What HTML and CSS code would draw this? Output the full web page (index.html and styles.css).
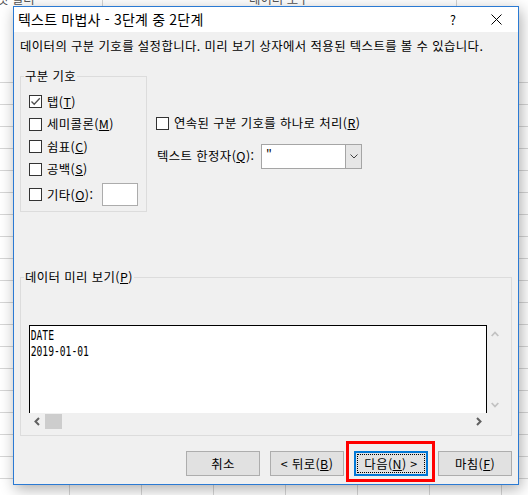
FILE: index.html
```html
<!DOCTYPE html>
<html lang="ko">
<head>
<meta charset="utf-8">
<title>텍스트 마법사</title>
<link rel="stylesheet" href="styles.css">
</head>
<body>
<div class="ribbon">
  <div class="rib-group g1"><span class="rib-label">릿 필터</span></div>
  <div class="rib-group g2"><span class="rib-label">데이터 도구</span></div>
</div>
<div class="sheet"></div>

<div class="dialog">
  <div class="titlebar">
    <span class="title">텍스트 마법사 - 3단계 중 2단계</span>
    <span class="tb-help">?</span>
    <svg class="tb-close" width="11" height="11" viewBox="0 0 11 11"><path d="M0.5 0.5 L10.5 10.5 M10.5 0.5 L0.5 10.5" stroke="#000" stroke-width="1" fill="none"/></svg>
  </div>
  <div class="body">
    <p class="desc">데이터의 구분 기호를 설정합니다. 미리 보기 상자에서 적용된 텍스트를 볼 수 있습니다.</p>
    <div class="options">
      <div class="group delims">
        <div class="group-label">구분 기호</div>
        <div class="rows">
          <div class="chk-row"><span class="cb"><svg width="11" height="11" viewBox="0 0 11 11"><path d="M1.5 5.5 L4.2 8.3 L9.8 2.2" stroke="#505050" stroke-width="1.3" fill="none"/></svg></span><span>탭(<u>T</u>)</span></div>
          <div class="chk-row"><span class="cb"></span><span>세미콜론(<u>M</u>)</span></div>
          <div class="chk-row"><span class="cb"></span><span>쉼표(<u>C</u>)</span></div>
          <div class="chk-row"><span class="cb"></span><span>공백(<u>S</u>)</span></div>
          <div class="chk-row other"><span class="cb"></span><span>기타(<u>O</u>):</span><span class="other-input"></span></div>
        </div>
      </div>
      <div class="right-opts">
        <div class="chk-row single"><span class="cb"></span><span>연속된 구분 기호를 하나로 처리(<u>R</u>)</span></div>
        <div class="qual">
          <span class="qual-label">텍스트 한정자(<u>Q</u>):</span>
          <div class="combo">
            <span class="combo-val">"</span>
            <span class="combo-btn"><svg width="8" height="5" viewBox="0 0 8 5"><path d="M0.5 0.5 L4 4 L7.5 0.5" stroke="#404040" stroke-width="1" fill="none"/></svg></span>
          </div>
        </div>
      </div>
    </div>

    <div class="group preview">
      <div class="group-label">데이터 미리 보기(<u>P</u>)</div>
      <div class="pv">
        <div class="pv-text"><div class="pv-lines">DATE<br>2019-01-01</div></div>
        <div class="vscroll">
          <svg width="8" height="6" viewBox="0 0 8 6"><path d="M0.7 5 L4 1.5 L7.3 5" stroke="#c2c2c2" stroke-width="1.8" fill="none"/></svg>
          <svg width="8" height="6" viewBox="0 0 8 6"><path d="M0.7 1 L4 4.5 L7.3 1" stroke="#c2c2c2" stroke-width="1.8" fill="none"/></svg>
        </div>
        <div class="hscroll">
          <span class="sb-btn"><svg width="6" height="9" viewBox="0 0 6 9"><path d="M5 1 L1.5 4.5 L5 8" stroke="#606060" stroke-width="2" fill="none"/></svg></span>
          <span class="sb-thumb"></span>
          <span class="sb-track"></span>
          <span class="sb-btn"><svg width="6" height="9" viewBox="0 0 6 9"><path d="M1 1 L4.5 4.5 L1 8" stroke="#606060" stroke-width="2" fill="none"/></svg></span>
        </div>
        <div class="corner"></div>
      </div>
    </div>

    <div class="buttons">
      <div class="btn">취소</div>
      <div class="btn">&lt; 뒤로(<u>B</u>)</div>
      <div class="btn focus"><span class="ring">다음(<u>N</u>) &gt;</span></div>
      <div class="btn">마침(<u>F</u>)</div>
    </div>
  </div>
</div>

<div class="highlight"></div>
</body>
</html>
```

FILE: styles.css
```css
* { box-sizing: border-box; }
html, body { margin: 0; padding: 0; }
body {
  width: 528px;
  height: 495px;
  overflow: hidden;
  position: relative;
  background: #fff;
  font-family: "Noto Sans CJK KR", "Noto Sans", sans-serif;
  font-size: 12.4px;
  letter-spacing: 0.4px;
  color: #000;
}
u { text-decoration: underline; text-underline-offset: 1px; }

/* Excel backdrop */
.ribbon {
  height: 61px;
  display: flex;
  align-items: flex-start;
  background: #fff;
}
.rib-group {
  height: 6px;
  border-right: 1px solid #d4d4d4;
  overflow: visible;
}
.g1 { width: 103px; text-indent: -3px; }
.g2 { width: 354px; padding-left: 146px; }
.rib-label {
  display: block;
  margin-top: -9px;
  line-height: 16px;
  color: #555;
  letter-spacing: 0;
  white-space: nowrap;
}
.sheet {
  height: 434px;
  background-color: #fff;
  background-image:
    linear-gradient(to bottom, transparent 21px, #d6d6d6 21px),
    linear-gradient(to right, transparent 69px, #d6d6d6 69px, #d6d6d6 70px, transparent 70px);
  background-size: 100% 22px, 72px 100%;
}

/* dialog window */
.dialog {
  position: absolute;
  left: 13px;
  top: 6px;
  width: 506px;
  border: 1px solid #2b7ad3;
  background: #f0f0f0;
  box-shadow: 2px 4px 14px rgba(0, 0, 0, 0.32);
}
.titlebar {
  height: 25px;
  background: #fff;
  display: flex;
  align-items: center;
  padding-left: 4px;
  padding-bottom: 2px;
}
.title { font-size: 14px; letter-spacing: 0.2px; line-height: 18px; white-space: nowrap; }
.tb-help { margin-left: auto; margin-right: 35px; line-height: 16px; padding-top: 2px; letter-spacing: 0; }
.tb-close { margin-right: 16px; margin-top: 2px; }

.body { padding: 6px 6px 8px 6px; }
.desc { margin: 0; line-height: 16px; white-space: nowrap; }

.options { display: flex; align-items: flex-start; }

.group { border: 1px solid #dcdcdc; }
.group-label {
  display: table;
  margin-top: -9px;
  margin-left: -5px;
  padding: 0 1px;
  line-height: 16px;
  background: #f0f0f0;
  white-space: nowrap;
}

.delims {
  width: 127px;
  margin-top: 22px;
  padding: 0 8px 2.5px 8px;
}
.rows { margin-top: 6.5px; }
.chk-row {
  display: flex;
  align-items: center;
  height: 22.5px;
  line-height: 16px;
  white-space: nowrap;
}
.chk-row.other { height: 28px; }
.cb {
  width: 13px;
  height: 13px;
  flex: none;
  border: 1px solid #333;
  background: #fff;
  margin-right: 5px;
  display: flex;
  align-items: center;
  justify-content: center;
}
.other-input {
  width: 36px;
  height: 23px;
  margin-left: auto;
  border: 1px solid #acacac;
  background: #fff;
}

.right-opts { margin-left: 9px; padding-top: 61px; }
.chk-row.single { height: 16px; }
.qual { display: flex; align-items: center; margin-top: 12.5px; }
.qual-label { width: 105px; padding-left: 1px; line-height: 16px; white-space: nowrap; }
.combo {
  width: 101px;
  height: 25px;
  border: 1px solid #a5a5a5;
  background: #fff;
  display: flex;
}
.combo-val { flex: 1; padding-left: 4px; line-height: 20px; }
.combo-btn {
  width: 16px;
  background: #e6e6e6;
  border-left: 1px solid #a5a5a5;
  display: flex;
  align-items: center;
  justify-content: center;
}

/* preview */
.preview {
  margin-top: 65px;
  padding: 0 7px 6px 8px;
}
.pv {
  margin-top: 40px;
  display: grid;
  grid-template-columns: 458px 16px;
  grid-template-rows: 88px 16px;
}
.pv-text {
  background: #fff;
  border: 1px solid #000;
  border-bottom: none;
  overflow: hidden;
}
.pv-lines {
  font-family: "DejaVu Sans Mono", "Liberation Mono", monospace;
  font-size: 14px;
  line-height: 16px;
  letter-spacing: 0;
  padding: 0.5px 0 0 1px;
  transform: scaleX(0.69);
  transform-origin: 0 0;
  white-space: nowrap;
}
.vscroll {
  display: flex;
  flex-direction: column;
  justify-content: space-between;
  align-items: center;
  padding: 6px 0 5px 0;
}
.hscroll { display: flex; align-items: stretch; }
.sb-btn {
  width: 16px;
  flex: none;
  display: flex;
  align-items: center;
  justify-content: center;
}
.sb-thumb {
  width: 17px;
  flex: none;
  margin-top: 1px;
  background: #cdcdcd;
}
.sb-track { flex: 1; }

/* buttons */
.buttons {
  margin-top: 15px;
  display: flex;
  justify-content: flex-end;
  gap: 10px;
}
.btn {
  width: 74px;
  height: 25px;
  background: #e1e1e1;
  border: 1px solid #adadad;
  display: flex;
  align-items: center;
  justify-content: center;
  line-height: 16px;
  white-space: nowrap;
}
.btn.focus {
  border: 2px solid #0078d7;
  padding: 1px;
  align-items: stretch;
}
.ring {
  flex: 1;
  border: 1px dotted #000;
  display: flex;
  align-items: center;
  justify-content: center;
}

/* annotation overlay */
.highlight {
  position: absolute;
  left: 346px;
  top: 441px;
  width: 89px;
  height: 41px;
  border: 3px solid #ff0000;
}
```
